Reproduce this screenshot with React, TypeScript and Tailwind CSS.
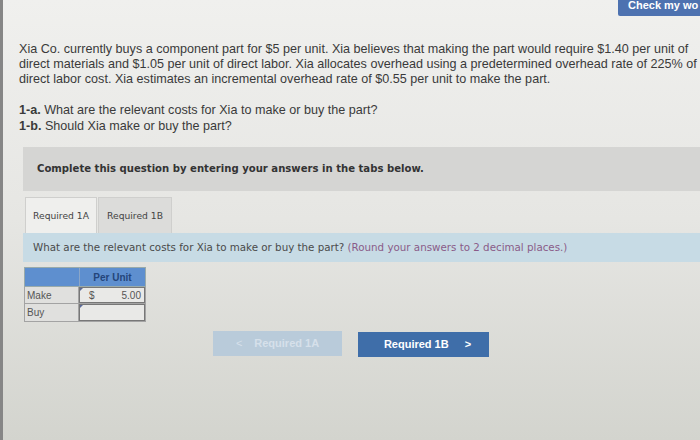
import React from "react";

export default function App() {
  return (
    <div className="relative w-[700px] h-[440px] overflow-hidden bg-gradient-to-b from-[#f0f0ee] via-[#e6e6e3] to-[#d3d4ce] border-l-[3px] border-[#868686]" style={{ fontFamily: '"Liberation Sans", Arial, sans-serif' }}>
      <div className="absolute right-0 top-0 w-[82px] h-[16px] bg-[#4d72b0] rounded-bl-[2px] text-white text-[11px] font-bold leading-[11px] pl-[10px] overflow-hidden whitespace-nowrap">Check my wo</div>

      <div className="pt-[42px] pl-[16px] pr-0 text-[#3a3a3a] text-[12.6px] leading-[15px]">
        <p>
          Xia Co. currently buys a component part for $5 per unit. Xia believes that making the part would require $1.40 per unit of direct materials and $1.05 per unit of direct labor. Xia allocates overhead using a predetermined overhead rate of 225% of direct labor cost. Xia estimates an incremental overhead rate of $0.55 per unit to make the part.
        </p>
        <p className="mt-[15px] leading-[16px]">
          <span className="font-bold">1-a.</span> What are the relevant costs for Xia to make or buy the part?
        </p>
        <p className="leading-[16px]">
          <span className="font-bold">1-b.</span> Should Xia make or buy the part?
        </p>
      </div>

      <div className="ml-[20px] mt-[13px] h-[44px] bg-[#d5d5d3] flex items-center pl-[14px] text-[10.1px] font-bold text-[#333]" style={{ fontFamily: '"DejaVu Sans", Verdana, sans-serif' }}>
        Complete this question by entering your answers in the tabs below.
      </div>

      <div className="ml-[22px] mt-[6px] flex gap-[1px] text-[9.2px] text-[#444]" style={{ fontFamily: '"DejaVu Sans", Verdana, sans-serif' }}>
        <div className="w-[72px] h-[36px] bg-[#efefed] border border-[#cfcfcd] border-b-0 flex items-center justify-center">Required 1A</div>
        <div className="w-[74px] h-[36px] bg-[#dcdcda] border border-[#cfcfcd] border-b-0 flex items-center justify-center">Required 1B</div>
      </div>

      <div className="ml-[20px] h-[29px] bg-[#c7dbe5] flex items-center pl-[10px] text-[10.3px] text-[#4a4a4a]" style={{ fontFamily: '"DejaVu Sans", Verdana, sans-serif' }}>
        <span>What are the relevant costs for Xia to make or buy the part? <span className="text-[#8a5b88]">(Round your answers to 2 decimal places.)</span></span>
      </div>

      <div className="ml-[21px] mt-[5px] w-[122px] text-[10px] text-[#555]">
        <div className="flex h-[20px] bg-[#5e8fcf] border border-[#9aa]">
          <div className="w-[54px]" />
          <div className="flex-1 flex items-center justify-center font-bold text-[#24457a] border-l border-[#8aa6c8]">Per Unit</div>
        </div>
        <div className="flex h-[17px] bg-[#e0e0de] border-x border-b border-[#a3a3a3]">
          <div className="w-[54px] flex items-center pl-[2px] border-r border-[#a3a3a3]">Make</div>
          <div className="flex-1 relative flex items-center justify-between px-[3px] border-[1.5px] border-[#777] bg-[#e9e9e7]">
            <span className="absolute left-0 top-0 w-0 h-0 border-t-[3px] border-r-[3px] border-t-[#5a6a9a] border-r-transparent" />
            <span className="pl-[6px]">$</span>
            <span>5.00</span>
          </div>
        </div>
        <div className="flex h-[18px] bg-[#e0e0de] border-x border-b border-[#a3a3a3]">
          <div className="w-[54px] flex items-center pl-[2px] border-r border-[#a3a3a3]">Buy</div>
          <div className="flex-1 relative border-[1.5px] border-[#777] bg-[#e9e9e7]">
            <span className="absolute left-0 top-0 w-0 h-0 border-t-[3px] border-r-[3px] border-t-[#5a6a9a] border-r-transparent" />
          </div>
        </div>
      </div>

      <div className="flex ml-[210px] mt-[9px] gap-[16px] text-[11px] font-bold">
        <div className="w-[129px] h-[25px] bg-[#b9cbda] text-[#d6e0ea] flex items-center justify-center gap-[12px]">
          <span className="font-normal">&lt;</span><span>Required 1A</span>
        </div>
        <div className="w-[131px] h-[25px] mt-[1px] bg-[#3f6ea9] text-white flex items-center justify-center gap-[16px] pl-[8px]">
          <span>Required 1B</span><span>&gt;</span>
        </div>
      </div>
    </div>
  );
}
